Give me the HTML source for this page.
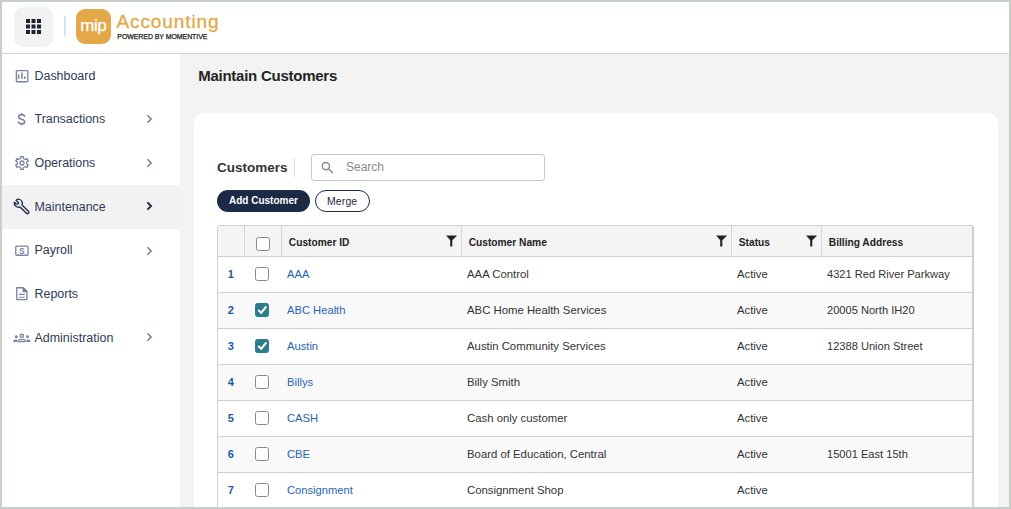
<!DOCTYPE html>
<html><head><meta charset="utf-8">
<style>
*{box-sizing:border-box;margin:0;padding:0}
html,body{width:1011px;height:509px;overflow:hidden;background:#c8cec8;font-family:"Liberation Sans",sans-serif}
.abs{position:absolute}
#frame{position:absolute;left:2px;top:2px;width:1007px;height:505px;background:#f3f3f3;overflow:hidden}
#header{position:absolute;left:0;top:0;width:1007px;height:52px;background:#fff;border-bottom:1px solid #d4d4d4;height:52px}
#side{position:absolute;left:0;top:52px;width:178px;height:460px;background:#fff}
.nav{position:absolute;left:0;width:178px;height:44px;color:#2d3b55;font-size:12.6px}
.nav .t{position:absolute;left:32px;top:14px;white-space:nowrap}
.nav .chev{position:absolute;left:144px;top:16px}
.nav.sel{background:#f2f2f2}
.navt{color:#2d3b55;font-size:12.45px;white-space:nowrap}
#card{position:absolute;left:192px;top:111px;width:804px;height:420px;background:#fff;border-radius:10px}
.tbl{position:absolute;left:215px;top:223px;width:757px;height:300px;border:1px solid #d0d0d0;border-right:2px solid #cfcfcf;border-radius:3px;background:#fff;overflow:hidden}
.row{position:absolute;left:0;width:754px;height:36px;border-bottom:1px solid #d0d0d0}
.row.alt{background:#f9f9f9}
.cell{position:absolute;white-space:nowrap;font-size:11.3px;color:#333}
.num{font-weight:bold;color:#2157a8}
.link{color:#2a64b0}
.cb{position:absolute;width:13.6px;height:13.6px;border:1.3px solid #8a8a8a;border-radius:2.5px;background:#fff}
.cb.on{background:#2a7e8e;border-color:#2a7e8e}
.hd{position:absolute;font-size:10.2px;font-weight:bold;color:#222;white-space:nowrap}
.vdiv{position:absolute;top:0;width:1px;height:30px;background:#d6d6d6}
.cell.nm{font-size:11.35px}
.cell.lk{font-size:11.2px}
.cell.num{font-size:11px}
.cell.ad{font-size:11.1px}
</style></head><body>
<div id="frame">
  <div id="header">
    <div class="abs" style="left:12px;top:5px;width:39px;height:40px;background:#f2f2f2;border-radius:9px"></div>
    <svg class="abs" style="left:24px;top:17px" width="16" height="15" viewBox="0 0 16 15">
      <g fill="#1d2230">
        <rect x="0" y="0" width="4" height="4"/><rect x="5.5" y="0" width="4" height="4"/><rect x="11" y="0" width="4" height="4"/>
        <rect x="0" y="5.5" width="4" height="4"/><rect x="5.5" y="5.5" width="4" height="4"/><rect x="11" y="5.5" width="4" height="4"/>
        <rect x="0" y="11" width="4" height="4"/><rect x="5.5" y="11" width="4" height="4"/><rect x="11" y="11" width="4" height="4"/>
      </g>
    </svg>
    <div class="abs" style="left:62px;top:14px;width:1.5px;height:20px;background:#dde3ea"></div>
    <div class="abs" style="left:74px;top:7px;width:35px;height:35px;background:#e3a948;border-radius:9px"></div>
    <div class="abs" style="left:78.2px;top:13.8px;font-size:17px;color:#fff;letter-spacing:-0.45px;-webkit-text-stroke:0.25px #fff">mip</div>
    <div class="abs" style="left:114.5px;top:8.6px;font-size:19px;color:#e3a948;white-space:nowrap;letter-spacing:0.9px;-webkit-text-stroke:0.3px #e3a948">Accounting</div>
    <div class="abs" style="left:115.3px;top:30.6px;font-size:7px;color:#222;white-space:nowrap;letter-spacing:-0.08px;-webkit-text-stroke:0.25px #222">POWERED BY MOMENTIVE</div>
  </div>

  <div id="side">
<div class="abs" style="left:0;top:131px;width:178px;height:44px;background:#f2f2f2"></div>
<div class="abs navt" style="left:32.5px;top:15.3px">Dashboard</div>
<div class="abs navt" style="left:32.5px;top:58.0px">Transactions</div>
<svg class="abs" style="left:144px;top:60.5px" width="7" height="9" viewBox="0 0 7 9"><path d="M1.4 0.3 L5.1 4.0 L1.4 7.7" fill="none" stroke="#7281a0" stroke-width="1.55"/></svg>
<div class="abs navt" style="left:32.5px;top:102.0px">Operations</div>
<svg class="abs" style="left:144px;top:104.5px" width="7" height="9" viewBox="0 0 7 9"><path d="M1.4 0.3 L5.1 4.0 L1.4 7.7" fill="none" stroke="#7281a0" stroke-width="1.55"/></svg>
<div class="abs navt" style="left:32.5px;top:146.0px">Maintenance</div>
<svg class="abs" style="left:144px;top:147.9px" width="7" height="9" viewBox="0 0 7 9"><path d="M1.4 0.3 L5.1 4.0 L1.4 7.7" fill="none" stroke="#1d2a45" stroke-width="1.9"/></svg>
<div class="abs navt" style="left:32.5px;top:189.0px">Payroll</div>
<svg class="abs" style="left:144px;top:193.0px" width="7" height="9" viewBox="0 0 7 9"><path d="M1.4 0.3 L5.1 4.0 L1.4 7.7" fill="none" stroke="#7281a0" stroke-width="1.55"/></svg>
<div class="abs navt" style="left:32.5px;top:233.3px">Reports</div>
<div class="abs navt" style="left:32.5px;top:277.4px">Administration</div>
<svg class="abs" style="left:144px;top:279.2px" width="7" height="9" viewBox="0 0 7 9"><path d="M1.4 0.3 L5.1 4.0 L1.4 7.7" fill="none" stroke="#7281a0" stroke-width="1.55"/></svg>
<svg class="abs" style="left:13px;top:15px" width="14" height="14" viewBox="0 0 14 14"><rect x="1.35" y="1.55" width="11.5" height="11.2" rx="0.8" fill="none" stroke="#7784a0" stroke-width="1.3"/><rect x="2.8" y="5.4" width="1.5" height="4.6" fill="#7784a0"/><rect x="6.2" y="3.5" width="1.5" height="6.5" fill="#7784a0"/><rect x="9" y="7.4" width="1.5" height="2.6" fill="#7784a0"/></svg>
<svg class="abs" style="left:14px;top:58px" width="11" height="14" viewBox="0 0 11 14"><path d="M8.6 4.3 C8.2 3.1 7.2 2.6 5.6 2.6 C3.8 2.6 2.7 3.5 2.7 4.9 C2.7 6.3 3.9 6.8 5.6 7.2 C7.5 7.6 8.7 8.2 8.7 9.7 C8.7 11.1 7.4 11.9 5.6 11.9 C3.9 11.9 2.7 11.2 2.3 10" fill="none" stroke="#7784a0" stroke-width="1.6" stroke-linecap="round"/><path d="M5.6 1.7 V2.6 M5.6 11.9 V12.6" stroke="#7784a0" stroke-width="1.6" stroke-linecap="round"/></svg>
<svg class="abs" style="left:13px;top:102px" width="14" height="14" viewBox="0 0 14 14"><path d="M5.65 2.29 L5.74 0.52 L8.26 0.52 L8.35 2.29 L10.40 3.48 L11.98 2.67 L13.24 4.85 L11.75 5.81 L11.75 8.19 L13.24 9.15 L11.98 11.33 L10.40 10.52 L8.35 11.71 L8.26 13.48 L5.74 13.48 L5.65 11.71 L3.60 10.52 L2.02 11.33 L0.76 9.15 L2.25 8.19 L2.25 5.81 L0.76 4.85 L2.02 2.67 L3.60 3.48 Z" fill="none" stroke="#7784a0" stroke-width="1.3" stroke-linejoin="round"/><circle cx="7" cy="7" r="2" fill="none" stroke="#7784a0" stroke-width="1.3"/></svg>
<svg class="abs" style="left:11px;top:144px" width="17" height="17" viewBox="0 0 17 17"><path d="M3.2 2.4 L5.6 4.8 L4.8 6.2 L3.0 5.8 L1.4 4.2 C1.0 6.6 2.4 8.8 4.8 9.2 C5.6 9.3 6.4 9.2 7.0 8.9 L13.4 15.3 C14.0 15.9 14.8 15.9 15.4 15.3 C16.0 14.7 16.0 13.9 15.4 13.3 L9.0 6.9 C9.3 6.3 9.4 5.5 9.3 4.7 C8.9 2.3 6.6 0.9 4.2 1.3 Z" fill="none" stroke="#1d2a4a" stroke-width="1.35" stroke-linejoin="round"/></svg>
<svg class="abs" style="left:12px;top:190px" width="16" height="13" viewBox="0 0 16 13"><rect x="1.75" y="2.15" width="12.3" height="9.1" rx="1" fill="none" stroke="#7784a0" stroke-width="1.3"/><text x="7.9" y="10" font-size="8.4" font-weight="bold" text-anchor="middle" fill="#7784a0" font-family="Liberation Sans">S</text></svg>
<svg class="abs" style="left:13px;top:232px" width="14" height="16" viewBox="0 0 14 16"><path d="M1.75 1.75 H8.3 L11.9 5.3 V13.6 H1.75 Z" fill="none" stroke="#7784a0" stroke-width="1.3" stroke-linejoin="round"/><path d="M8.0 1.9 V5.6 H11.8 Z" fill="#7784a0" stroke="#7784a0" stroke-width="1.1" stroke-linejoin="round"/><path d="M3.9 8.4 H9.8 M3.9 11.2 H9.8" stroke="#7784a0" stroke-width="1.1"/></svg>
<svg class="abs" style="left:10px;top:278px" width="19" height="12" viewBox="0 0 19 12"><circle cx="9.8" cy="3.9" r="1.6" fill="none" stroke="#7784a0" stroke-width="1.4"/><path d="M6.3 9.7 V8.9 C6.3 8.1 6.9 7.6 7.8 7.6 H11.8 C12.7 7.6 13.3 8.1 13.3 8.9 V9.7 Z" fill="none" stroke="#7784a0" stroke-width="1.25" stroke-linejoin="round"/><circle cx="4.3" cy="4.8" r="1.45" fill="#7784a0"/><circle cx="15.5" cy="4.8" r="1.45" fill="#7784a0"/><path d="M1.2 9.9 C1.2 8.0 2.6 7.4 4.5 7.4 L5.2 7.5 V9.9 Z M18.5 9.9 C18.5 8.0 17.1 7.4 15.2 7.4 L14.5 7.5 V9.9 Z" fill="#7784a0"/></svg>
</div>
  <div class="abs" style="left:196.2px;top:64.7px;font-size:15px;font-weight:bold;color:#242424;white-space:nowrap;letter-spacing:-0.25px">Maintain Customers</div>

  <div id="card"></div>
  <div class="abs" style="left:215px;top:157.7px;font-size:13.5px;font-weight:bold;color:#333;white-space:nowrap">Customers</div>
  <div class="abs" style="left:292px;top:156px;width:1px;height:19px;background:#dcdcdc"></div>
  <div class="abs" style="left:309px;top:152px;width:234px;height:27px;border:1px solid #c9c9c9;border-radius:3px;background:#fff"></div>
  <div class="abs" style="left:344px;top:158px;font-size:12px;color:#8a8a8a">Search</div>
  <svg class="abs" style="left:318px;top:157.6px" width="14" height="14" viewBox="0 0 14 14"><circle cx="5.9" cy="6.1" r="3.6" fill="none" stroke="#8d8d8d" stroke-width="1.45"/><path d="M8.6 8.8 L12.4 12.6" stroke="#8d8d8d" stroke-width="1.6" stroke-linecap="round"/></svg>
  <div class="abs" style="left:215px;top:188px;width:93px;height:22px;background:#1b2a45;border-radius:11px"></div>
  <div class="abs" style="left:227px;top:193px;font-size:10px;font-weight:bold;color:#fff;white-space:nowrap">Add Customer</div>
  <div class="abs" style="left:313px;top:188px;width:55px;height:22px;border:1px solid #1b2a45;border-radius:11px"></div>
  <div class="abs" style="left:325px;top:192.5px;font-size:10.5px;color:#1b2a45;white-space:nowrap;letter-spacing:0.1px">Merge</div>

  <div class="tbl" id="tbl">
<div class="abs" style="left:0;top:0;width:756px;height:31px;background:#f4f4f4;border-bottom:1px solid #d0d0d0"></div>
<div class="vdiv" style="left:26.0px"></div>
<div class="vdiv" style="left:63.0px"></div>
<div class="vdiv" style="left:243.0px"></div>
<div class="vdiv" style="left:512.8px"></div>
<div class="vdiv" style="left:602.8px"></div>
<div class="cb" style="left:38px;top:11px"></div>
<div class="hd" style="left:70.8px;top:11.4px">Customer ID</div>
<div class="hd" style="left:250.7px;top:11.4px">Customer Name</div>
<div class="hd" style="left:520.8px;top:11.4px">Status</div>
<div class="hd" style="left:610.8px;top:11.4px">Billing Address</div>
<svg class="abs" style="left:227.8px;top:9.0px" width="12" height="12" viewBox="0 0 12 12"><path d="M0.1 0.4 H11.1 L6.3 5.3 V11.4 H4.2 V5.3 Z" fill="#222"/></svg>
<svg class="abs" style="left:497.8px;top:9.0px" width="12" height="12" viewBox="0 0 12 12"><path d="M0.1 0.4 H11.1 L6.3 5.3 V11.4 H4.2 V5.3 Z" fill="#222"/></svg>
<svg class="abs" style="left:588.0px;top:9.0px" width="12" height="12" viewBox="0 0 12 12"><path d="M0.1 0.4 H11.1 L6.3 5.3 V11.4 H4.2 V5.3 Z" fill="#222"/></svg>
<div class="row" style="top:31px">
<div class="cell num" style="left:9.8px;top:11px">1</div>
<div class="cb" style="left:37px;top:10px"></div>
<div class="cell link lk" style="left:69px;top:11px">AAA</div>
<div class="cell nm" style="left:249px;top:11px">AAA Control</div>
<div class="cell" style="left:519px;top:11px">Active</div>
<div class="cell ad" style="left:609px;top:11px">4321 Red River Parkway</div>
</div>
<div class="row alt" style="top:67px">
<div class="cell num" style="left:9.8px;top:11px">2</div>
<div class="cb on" style="left:37px;top:10px"><svg class="abs" style="left:0.5px;top:1px" width="11" height="10" viewBox="0 0 11 10"><path d="M1.2 5 L4.2 7.8 L9.3 1.5" fill="none" stroke="#fff" stroke-width="2"/></svg></div>
<div class="cell link lk" style="left:69px;top:11px">ABC Health</div>
<div class="cell nm" style="left:249px;top:11px">ABC Home Health Services</div>
<div class="cell" style="left:519px;top:11px">Active</div>
<div class="cell ad" style="left:609px;top:11px">20005 North IH20</div>
</div>
<div class="row" style="top:103px">
<div class="cell num" style="left:9.8px;top:11px">3</div>
<div class="cb on" style="left:37px;top:10px"><svg class="abs" style="left:0.5px;top:1px" width="11" height="10" viewBox="0 0 11 10"><path d="M1.2 5 L4.2 7.8 L9.3 1.5" fill="none" stroke="#fff" stroke-width="2"/></svg></div>
<div class="cell link lk" style="left:69px;top:11px">Austin</div>
<div class="cell nm" style="left:249px;top:11px">Austin Community Services</div>
<div class="cell" style="left:519px;top:11px">Active</div>
<div class="cell ad" style="left:609px;top:11px">12388 Union Street</div>
</div>
<div class="row alt" style="top:139px">
<div class="cell num" style="left:9.8px;top:11px">4</div>
<div class="cb" style="left:37px;top:10px"></div>
<div class="cell link lk" style="left:69px;top:11px">Billys</div>
<div class="cell nm" style="left:249px;top:11px">Billy Smith</div>
<div class="cell" style="left:519px;top:11px">Active</div>
</div>
<div class="row" style="top:175px">
<div class="cell num" style="left:9.8px;top:11px">5</div>
<div class="cb" style="left:37px;top:10px"></div>
<div class="cell link lk" style="left:69px;top:11px">CASH</div>
<div class="cell nm" style="left:249px;top:11px">Cash only customer</div>
<div class="cell" style="left:519px;top:11px">Active</div>
</div>
<div class="row alt" style="top:211px">
<div class="cell num" style="left:9.8px;top:11px">6</div>
<div class="cb" style="left:37px;top:10px"></div>
<div class="cell link lk" style="left:69px;top:11px">CBE</div>
<div class="cell nm" style="left:249px;top:11px">Board of Education, Central</div>
<div class="cell" style="left:519px;top:11px">Active</div>
<div class="cell ad" style="left:609px;top:11px">15001 East 15th</div>
</div>
<div class="row" style="top:247px">
<div class="cell num" style="left:9.8px;top:11px">7</div>
<div class="cb" style="left:37px;top:10px"></div>
<div class="cell link lk" style="left:69px;top:11px">Consignment</div>
<div class="cell nm" style="left:249px;top:11px">Consignment Shop</div>
<div class="cell" style="left:519px;top:11px">Active</div>
</div>
</div>
</div>
</body></html>
